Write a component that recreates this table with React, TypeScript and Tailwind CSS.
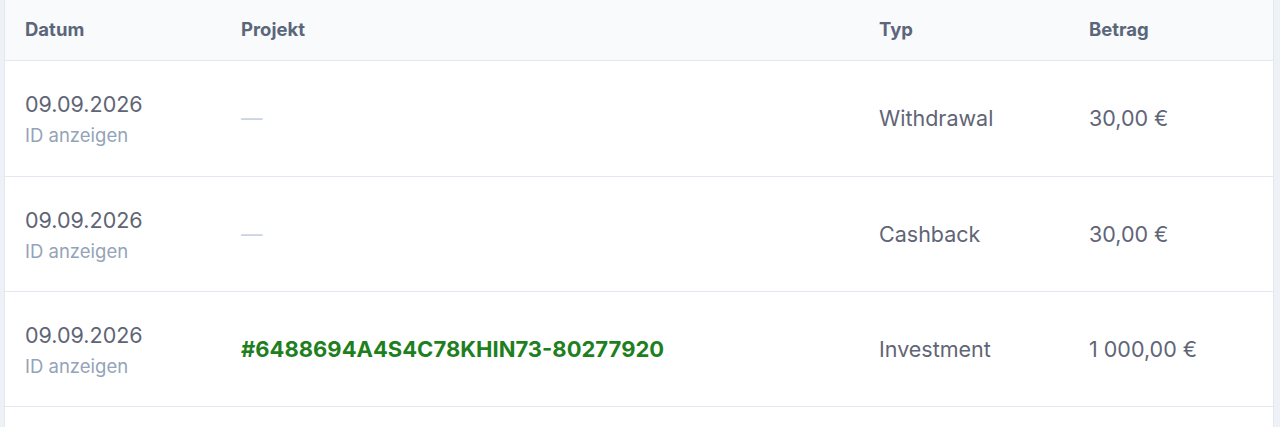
import React from "react";

type Row = {
    date: string;
    project: string | null;
    type: string;
    amount: string;
};

const rows: Row[] = [
    { date: "09.09.2026", project: null, type: "Withdrawal", amount: "30,00 €" },
    { date: "09.09.2026", project: null, type: "Cashback", amount: "30,00 €" },
    { date: "09.09.2026", project: "#6488694A4S4C78KHIN73-80277920", type: "Investment", amount: "1 000,00 €" },
];

const cols = "grid grid-cols-[216px_638px_210px_1fr]";

export default function App() {
    return (
        <div className="min-h-[427px] bg-[#eef2f7] pl-[4px] pr-[6px] font-['Inter','Liberation_Sans',sans-serif]">
            <div className="min-h-[427px] border-x border-[#e2e8f0] bg-white">
                {/* header */}
                <div className={`${cols} h-[61px] items-center border-b border-[#e2e8f0] bg-[#f8fafc] text-[18.5px] font-bold text-[#5b667a]`}>
                    <div className="px-5">Datum</div>
                    <div className="px-5">Projekt</div>
                    <div className="px-5">Typ</div>
                    <div className="px-5">Betrag</div>
                </div>
                {rows.map((r, i) => (
                    <div
                        key={i}
                        className={`${cols} ${i === 0 ? "h-[116px]" : "h-[115px]"} items-center border-b border-[#e2e8f0] text-[21.5px] text-[#5f6576]`}
                    >
                        <div className="px-5">
                            <div className="leading-[26px]">{r.date}</div>
                            <div className="mt-[7px] text-[18.5px] leading-[22px] text-[#94a3b8]">ID anzeigen</div>
                        </div>
                        <div className="px-5">
                            {r.project ? (
                                <span className="text-[22px] font-bold text-[#1f7f1f]">{r.project}</span>
                            ) : (
                                <span className="text-[#cbd5e1]">—</span>
                            )}
                        </div>
                        <div className="px-5">{r.type}</div>
                        <div className="px-5">{r.amount}</div>
                    </div>
                ))}
            </div>
        </div>
    );
}
